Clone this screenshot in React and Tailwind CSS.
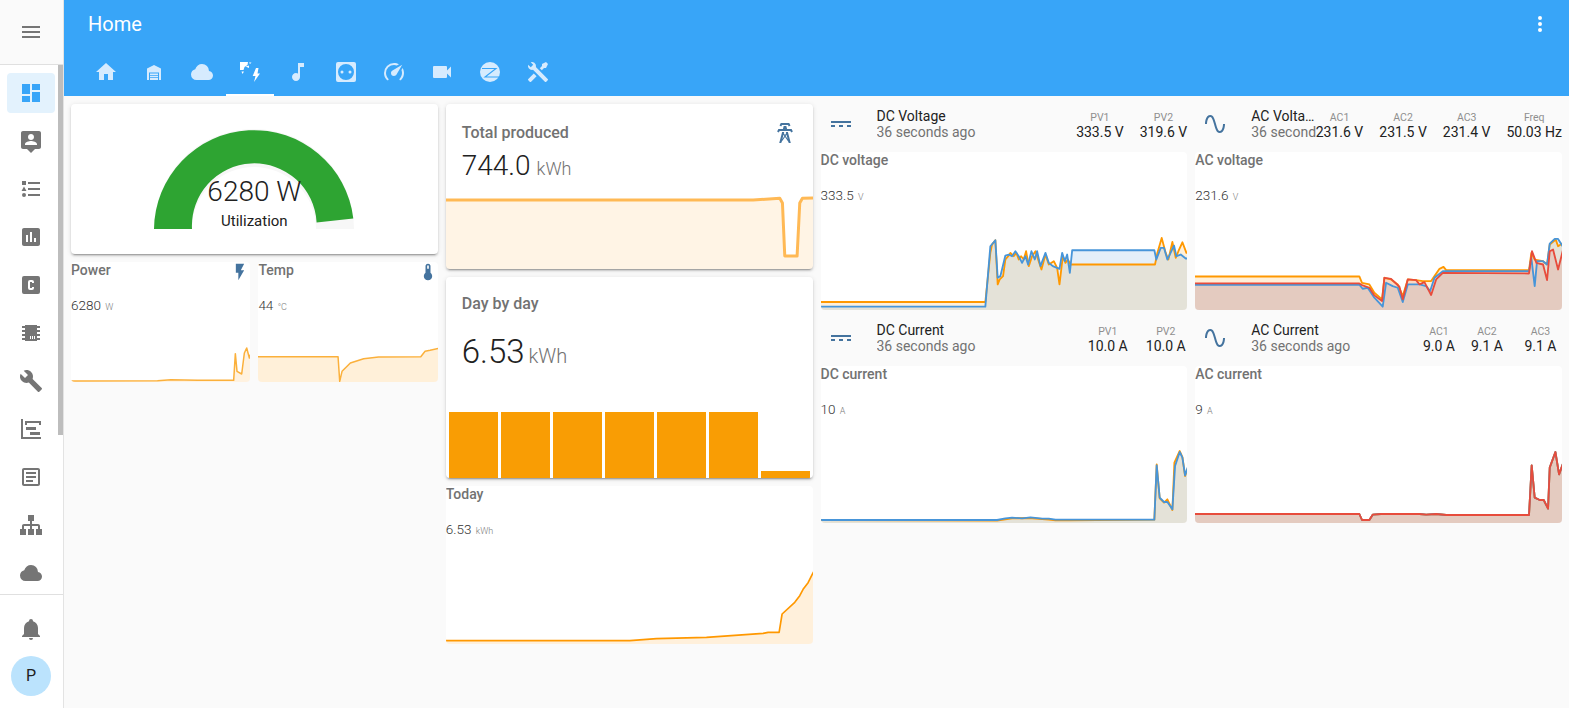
import React from "react";

const paths = {
  menu: "M3,6H21V8H3V6M3,11H21V13H3V11M3,16H21V18H3V16Z",
  dashboard: "M13,3V9H21V3M13,21H21V11H13M3,21H11V15H3M3,13H11V3H3V13Z",
  tooltipAccount: "M20 2H4C2.9 2 2 2.9 2 4V18C2 19.1 2.9 20 4 20H8L12 24L16 20H20C21.1 20 22 19.1 22 18V4C22 2.9 21.1 2 20 2M12 5C13.7 5 15 6.3 15 8S13.7 11 12 11 9 9.7 9 8 10.3 5 12 5M18 16H6V15C6 13 10 11.9 12 11.9S18 13 18 15V16Z",
  listType: "M5,9.5L7.5,14H2.5L5,9.5M3,4H7V8H3V4M5,20A2,2 0 0,0 7,18A2,2 0 0,0 5,16A2,2 0 0,0 3,18A2,2 0 0,0 5,20M9,5V7H21V5H9M9,19H21V17H9V19M9,13H21V11H9V13Z",
  chartBox: "M19 3H5C3.9 3 3 3.9 3 5V19C3 20.1 3.9 21 5 21H19C20.1 21 21 20.1 21 19V5C21 3.9 20.1 3 19 3M9 17H7V10H9V17M13 17H11V7H13V17M17 17H15V13H17V17Z",
  alphaC: "M11,7A2,2 0 0,0 9,9V15A2,2 0 0,0 11,17H13A2,2 0 0,0 15,15V14H13V15H11V9H13V10H15V9A2,2 0 0,0 13,7H11M5,3H19A2,2 0 0,1 21,5V19A2,2 0 0,1 19,21H5A2,2 0 0,1 3,19V5A2,2 0 0,1 5,3Z",
  chip: "M6,4H18V5H21V7H18V9H21V11H18V13H21V15H18V17H21V19H18V20H6V19H3V17H6V15H3V13H6V11H3V9H6V7H3V5H6V4M11,15V18H12V15H11M13,15V18H14V15H13M15,15V18H16V15H15Z",
  wrench: "M22.7,19L13.6,9.9C14.5,7.6 14,4.9 12.1,3C10.1,1 7.1,0.6 4.7,1.7L9,6L6,9L1.6,4.7C0.4,7.1 0.9,10.1 2.9,12.1C4.8,14 7.5,14.5 9.8,13.6L18.9,22.7C19.3,23.1 19.9,23.1 20.3,22.7L22.6,20.4C23.1,20 23.1,19.3 22.7,19Z",
  timeline: "M2,2H4V20H22V22H2V2M7,10H17V13H7V10M11,15H21V18H11V15M6,4H22V8H20V6H8V8H6V4Z",
  textBox: "M5,3C3.89,3 3,3.89 3,5V19C3,20.11 3.89,21 5,21H19C20.11,21 21,20.11 21,19V5C21,3.89 20.11,3 19,3H5M5,5H19V19H5V5M7,7V9H17V7H7M7,11V13H17V11H7M7,15V17H14V15H7Z",
  sitemap: "M9,2V8H11V11H5C3.89,11 3,11.89 3,13V16H1V22H7V16H5V13H11V16H9V22H15V16H13V13H19V16H17V22H23V16H21V13C21,11.89 20.11,11 19,11H13V8H15V2H9Z",
  cloud: "M6.5 20Q4.22 20 2.61 18.43 1 16.85 1 14.58 1 12.63 2.17 11.1 3.35 9.57 5.25 9.15 5.88 6.85 7.75 5.43 9.63 4 12 4 14.93 4 16.96 6.04 19 8.07 19 11 20.73 11.2 21.86 12.5 23 13.78 23 15.5 23 17.38 21.69 18.69 20.38 20 18.5 20Z",
  bell: "M21,19V20H3V19L5,17V11C5,7.9 7.03,5.17 10,4.29C10,4.19 10,4.1 10,4A2,2 0 0,1 12,2A2,2 0 0,1 14,4C14,4.1 14,4.19 14,4.29C16.97,5.17 19,7.9 19,11V17L21,19M14,21A2,2 0 0,1 12,23A2,2 0 0,1 10,21",
  home: "M10,20V14H14V20H19V12H22L12,3L2,12H5V20H10Z",
  garage: "M12 5L19 8.5V20H17V12.5H7V20H5V8.5ZM8 13.5H16V15H8ZM8 15.75H16V17.25H8ZM8 18H16V20H8Z",
  music: "M12 3V13.55C11.41 13.21 10.73 13 10 13C7.79 13 6 14.79 6 17S7.79 21 10 21 14 19.21 14 17V7H18V3H12Z",
  socket: "M4 2H20A2 2 0 0 1 22 4V20A2 2 0 0 1 20 22H4A2 2 0 0 1 2 20V4A2 2 0 0 1 4 2ZM12 4A8 8 0 1 0 12 20A8 8 0 1 0 12 4ZM8 10.5A1.5 1.5 0 1 1 8 13.5A1.5 1.5 0 1 1 8 10.5ZM16 10.5A1.5 1.5 0 1 1 16 13.5A1.5 1.5 0 1 1 16 10.5Z",
  speedometer: "M12 16A3 3 0 0 1 9 13C9 11.88 9.61 10.9 10.5 10.39L20.21 4.77L14.68 14.35C14.18 15.33 13.17 16 12 16M12 3C13.81 3 15.5 3.5 16.97 4.32L14.87 5.53C14 5.19 13 5 12 5A8 8 0 0 0 4 13C4 15.21 4.89 17.21 6.34 18.65H6.35C6.74 19.04 6.74 19.67 6.35 20.06C5.96 20.45 5.32 20.45 4.93 20.07V20.07C3.12 18.26 2 15.76 2 13A10 10 0 0 1 12 3M22 13C22 15.76 20.88 18.26 19.07 20.07V20.07C18.68 20.45 18.05 20.45 17.66 20.06C17.27 19.67 17.27 19.04 17.66 18.65V18.65C19.11 17.2 20 15.21 20 13C20 12 19.81 11 19.46 10.1L20.67 8C21.5 9.5 22 11.18 22 13Z",
  video: "M17,10.5V7A1,1 0 0,0 16,6H4A1,1 0 0,0 3,7V17A1,1 0 0,0 4,18H16A1,1 0 0,0 17,17V13.5L21,17.5V6.5L17,10.5Z",
  tools: "M21.71 20.29L20.29 21.71A1 1 0 0 1 18.88 21.71L7 9.85A3.81 3.81 0 0 1 6 10A4 4 0 0 1 2.22 4.7L4.76 7.24L5.29 6.71L6.71 5.29L7.24 4.76L4.7 2.22A4 4 0 0 1 10 6A3.81 3.81 0 0 1 9.85 7L21.71 18.88A1 1 0 0 1 21.71 20.29M2.29 18.88A1 1 0 0 0 2.29 20.29L3.71 21.71A1 1 0 0 0 5.12 21.71L10.59 16.25L7.76 13.42M20 2L16 4V6L13.83 8.17L15.83 10.17L18 8H20L22 4Z",
  flash: "M7,2V13H10V22L17,10H13L17,2H7Z",
  thermometer: "M15 13V5A3 3 0 0 0 9 5V13A5 5 0 1 0 15 13M12 4A1 1 0 0 1 13 5V8H11V5A1 1 0 0 1 12 4Z",
  tower: "M8.28,5.45L6.5,4.55L7.76,2H16.23L17.5,4.55L15.72,5.44L15,4H9L8.28,5.45M18.62,8H14.09L13.3,5H10.7L9.91,8H5.38L4.1,10.55L5.89,11.44L6.62,10H17.38L18.1,11.45L19.89,10.56L18.62,8M17.77,22H15.7L15.46,21.1L12,15.9L8.53,21.1L8.3,22H6.23L9.12,11H11.19L10.83,12.35L12,14.1L13.16,12.35L12.81,11H14.88L17.77,22M11.4,15L10.5,13.65L9.32,18.13L11.4,15M14.68,18.12L13.5,13.64L12.6,15L14.68,18.12Z",
  currentDc: "M2,9H22V11H2V9M2,13H6V15H2V13M10,13H14V15H10V13M18,13H22V15H18V13Z",
  sine: "M16.5,21C13.5,21 12.31,16.76 11.05,12.28C10.14,9.04 9,5 7.5,5C4.11,5 4,11.93 4,12H2C2,11.63 2.06,3 7.5,3C10.5,3 11.71,7.25 12.97,11.74C13.86,14.96 15,19 16.5,19C19.94,19 20.03,12.07 20.03,12H22.03C22.03,12.37 21.97,21 16.5,21Z",
  dots: "M12,16A2,2 0 0,1 14,18A2,2 0 0,1 12,20A2,2 0 0,1 10,18A2,2 0 0,1 12,16M12,10A2,2 0 0,1 14,12A2,2 0 0,1 12,14A2,2 0 0,1 10,12A2,2 0 0,1 12,10M12,4A2,2 0 0,1 14,6A2,2 0 0,1 12,8A2,2 0 0,1 10,6A2,2 0 0,1 12,4Z",
};

function Icon({ d, className = "w-6 h-6" }) {
  return (
    <svg viewBox="0 0 24 24" fill="currentColor" fillRule="evenodd" className={"block shrink-0 " + className}>
      <path d={d} />
    </svg>
  );
}

function SolarIcon() {
  return (
    <svg viewBox="0 0 24 24" fill="currentColor" className="block w-6 h-6">
      <path d="M2 2H10L9.5 5L6.5 7L5.5 10L2 10Z" />
      <path d="M11 2.5H13.5L12 4Z" />
      <path d="M7.5 6.5L11 5.5L11 8Z" />
      <path d="M3.5 11.5H6L4.5 14Z" />
      <path d="M18 8H20.5L19.5 13.5H22L16 22L17.5 16H14.7Z" />
    </svg>
  );
}

function ZigbeeIcon() {
  return (
    <svg viewBox="0 0 24 24" className="block w-6 h-6">
      <circle cx="12" cy="12" r="10" fill="currentColor" />
      <path d="M4 8.5H18L7 17H21" fill="none" stroke="#38a5f8" strokeWidth="1.1" />
    </svg>
  );
}

const ORANGE = "#ff9800";
const BLUE = "#4795d9";
const RED = "#e74c3c";

// box and points use the same units: 1/3 of a screen pixel
function Chart({ box, series, className, opacity = 0.15 }) {
  const [, y, , h] = box.split(" ").map(Number);
  const bottom = y + h;
  return (
    <svg viewBox={box} preserveAspectRatio="none" className={"block w-full mt-auto " + className}>
      {series.map((s, i) => {
        const pts = s.points.trim().split(/\s+/);
        const first = pts[0].split(",")[0];
        const last = pts[pts.length - 1].split(",")[0];
        return (
          <path
            key={"f" + i}
            d={`M${first},${bottom + 10} L${pts.join(" L")} L${last},${bottom + 10}Z`}
            fill={s.color}
            fillOpacity={s.fill || opacity}
          />
        );
      })}
      {series.map((s, i) => (
        <polyline
          key={i}
          points={s.points}
          fill="none"
          stroke={s.line || s.color}
          strokeWidth={s.width || 5.5}
          strokeLinejoin="round"
          strokeLinecap="round"
        />
      ))}
    </svg>
  );
}

const dcV = [
  { color: ORANGE, points: "10,618 510,618 525,470 530,445 540,432 547,565 553,550 563,540 570,490 580,478 585,470 595,480 603,470 610,490 617,480 625,490 632,465 640,510 650,480 660,465 668,490 678,520 690,475 700,505 715,495 725,515 732,565 742,480 750,500 757,490 765,505 1018,505 1025,470 1038,425 1050,470 1058,490 1070,437 1080,485 1088,465 1100,438 1112,470 1125,468" },
  { color: BLUE, points: "10,632 510,632 525,450 540,432 547,545 555,540 570,478 580,475 590,480 600,465 610,480 620,500 630,480 638,505 648,465 658,490 665,465 675,510 690,470 700,500 712,510 732,518 740,470 748,495 755,475 763,530 770,462 1016,462 1022,490 1035,455 1045,455 1055,490 1075,448 1082,480 1095,475 1110,487 1125,487" },
];
const acV = [
  { color: ORANGE, points: "10,541 510,541 518,560 540,565 555,590 578,610 585,545 605,550 625,565 640,600 655,550 680,552 700,555 725,555 735,540 750,518 762,512 770,522 1018,522 1025,470 1035,490 1060,495 1072,505 1080,445 1098,430 1105,450 1125,437" },
  { color: BLUE, points: "10,566 510,566 520,578 535,575 555,605 580,632 590,560 610,570 625,575 640,618 655,565 690,565 710,570 722,585 735,545 760,525 1018,525 1025,485 1035,570 1042,495 1060,495 1072,505 1080,442 1095,428 1105,428 1125,460" },
  { color: RED, points: "10,562 510,562 520,568 540,575 555,598 578,615 585,545 605,548 630,572 640,610 655,550 680,552 690,565 705,558 725,597 740,550 760,530 1018,532 1027,465 1040,500 1060,505 1072,552 1080,465 1090,460 1105,520 1125,440" },
];
const dcA = [
  { color: ORANGE, points: "10,612 545,614 590,607 640,606 680,609 700,611 720,613 760,613 1016,611 1023,445 1032,547 1045,560 1055,550 1070,582 1076,440 1092,405 1100,423 1108,480 1125,430" },
  { color: BLUE, points: "10,612 545,612 570,607 590,605 620,607 645,604 680,608 700,608 720,611 1016,611 1023,448 1032,545 1045,558 1055,558 1070,580 1078,450 1092,408 1100,425 1108,478 1125,428" },
];
const acCurrent = "10,594 510,594 518,612 540,612 550,596 575,594 690,594 710,596 740,594 770,597 1018,597 1026,448 1035,545 1050,552 1062,552 1075,578 1080,455 1097,408 1108,475 1125,428";
const acA = [
  { color: ORANGE, points: acCurrent },
  { color: BLUE, points: acCurrent },
  { color: RED, points: acCurrent },
];

function Mini({ title, value, unit, icon, className = "", children }) {
  return (
    <div className={"relative flex flex-col bg-white rounded-sm overflow-hidden " + className}>
      <div className="text-sm leading-4 font-medium text-[#727272]">{title}</div>
      {icon && (
        <div className="absolute top-0 right-0 text-[#44739e]">
          <Icon d={icon} className="w-5 h-5" />
        </div>
      )}
      <div className="mt-[19px] text-[13.5px] leading-4 font-light text-[#333]">
        {value} <span className="text-[9px] text-[#7d7d7d] ml-px">{unit}</span>
      </div>
      {children}
    </div>
  );
}

function Glance({ icon, name, cells }) {
  return (
    <div className="flex items-center h-10 pl-2">
      <div className="text-[#44739e]">
        <Icon d={icon} />
      </div>
      <div className="ml-6 flex-1 min-w-0 text-sm leading-4">
        <div className="truncate text-[#212121]">{name}</div>
        <div className="whitespace-nowrap overflow-hidden text-[#727272]">36 seconds ago</div>
      </div>
      <div className="flex gap-4 text-center">
        {cells.map((c) => (
          <div key={c.label} className={c.cls}>
            <div className="text-[10.5px] leading-3 mt-1 text-[#8f8f8f]">{c.label}</div>
            <div className="text-sm leading-4 whitespace-nowrap text-[#212121]">{c.value}</div>
          </div>
        ))}
      </div>
    </div>
  );
}

const navIcons = ["tooltipAccount", "listType", "chartBox", "alphaC", "chip", "wrench", "timeline", "textBox", "sitemap", "cloud"];
const tabs = ["home", "garage", "cloud", null, "music", "socket", "speedometer", "video", "zigbee", "tools"];
const bars = [66, 66, 66, 66, 66, 66, 7];

function Gauge() {
  return (
    <svg viewBox="0 0 200 100" className="block w-[200px] h-[100px]">
      <path d="M0 100A100 100 0 0 1 200 100H162A62 62 0 0 0 38 100Z" fill="#f7f7f7" />
      <path d="M0 100A100 100 0 0 1 199.3 89.4L162.6 93.4A62 62 0 0 0 38 100Z" fill="#2ea432" />
    </svg>
  );
}

const cardShadow = "shadow-[0_2px_2px_0_rgba(0,0,0,0.14),0_1px_5px_0_rgba(0,0,0,0.12),0_3px_1px_-2px_rgba(0,0,0,0.2)]";

export default function App() {
  return (
    <div className="flex h-screen overflow-hidden bg-[#fafafa] [font-family:Roboto,sans-serif]">
      <aside className="w-16 shrink-0 flex flex-col bg-white border-r border-[#e3e3e3]">
        <div className="h-[65px] shrink-0 flex items-center justify-center pr-0.5 bg-[#fafafa] border-b border-[#e0e0e0] text-[#757575]">
          <Icon d={paths.menu} />
        </div>
        <div className="relative flex-1 pt-2">
          <div className="absolute right-0 top-0 w-[5px] h-[370px] bg-[#bdbdbd]" />
          <div className="mx-[7px] w-12 h-10 rounded bg-[#e3f2fd] flex items-center justify-center text-[#38a5f8]">
            <Icon d={paths.dashboard} />
          </div>
          {navIcons.map((n) => (
            <div key={n} className="mx-[7px] mt-2 w-12 h-10 flex items-center justify-center text-[#757575]">
              <Icon d={paths[n]} />
            </div>
          ))}
        </div>
        <div className="h-[114px] shrink-0 border-t border-[#e0e0e0] flex flex-col items-center pr-px pt-[22px]">
          <div className="text-[#757575]">
            <Icon d={paths.bell} />
          </div>
          <div className="mt-[15px] w-10 h-10 rounded-full bg-[#bbe3fd] flex items-center justify-center text-base text-[#212121]">P</div>
        </div>
      </aside>

      <div className="flex-1 min-w-0 flex flex-col">
        <header className="h-24 shrink-0 bg-[#38a5f8] text-white">
          <div className="h-12 flex items-center pl-6 pr-[17px]">
            <div className="flex-1 text-xl">Home</div>
            <Icon d={paths.dots} />
          </div>
          <div className="h-12 flex pl-[18px]">
            {tabs.map((t, i) => (
              <div
                key={i}
                className={
                  t
                    ? "w-12 h-12 flex items-center justify-center text-[#d6ebfe]"
                    : "w-12 h-12 flex items-center justify-center text-white border-b-2 border-white pt-0.5"
                }
              >
                {t === null ? <SolarIcon /> : t === "zigbee" ? <ZigbeeIcon /> : <Icon d={paths[t]} />}
              </div>
            ))}
          </div>
        </header>

        <main className="flex-1 grid grid-cols-4 gap-2 pl-[7px] pr-[7px] pt-2 items-start">
          <div className="flex flex-col gap-2">
            <div className={"relative h-[150px] bg-white rounded-sm flex justify-center pt-[25px] " + cardShadow}>
              <Gauge />
              <div className="absolute inset-x-0 top-[72px] text-center text-[28px] leading-8 font-light text-[#212121]">6280 W</div>
              <div className="absolute inset-x-0 top-[108px] text-center text-[15px] leading-[18px] text-[#212121]">Utilization</div>
            </div>
            <div className="flex gap-2">
              <Mini title="Power" value="6280" unit="W" icon={paths.flash} className="flex-1 h-[120px]">
                <Chart
                  box="21 740 537 117"
                  className="h-[39px]"
                  series={[{ color: ORANGE, width: 4.5, fill: 0.12, line: "#fbb03b", points: "15,854 280,853 320,850 400,852 508,852 513,772 518,825 532,833 540,770 547,755 555,785 565,755" }]}
                />
              </Mini>
              <Mini title="Temp" value="44" unit="°C" icon={paths.thermometer} className="flex-1 h-[120px]">
                <Chart
                  box="582 740 540 117"
                  className="h-[39px]"
                  series={[{ color: ORANGE, width: 4.5, fill: 0.15, line: "#fbb03b", points: "575,781 823,781 828,855 835,825 860,800 900,787 945,782 1072,781 1085,765 1100,762 1130,755" }]}
                />
              </Mini>
            </div>
          </div>

          <div className="flex flex-col gap-2">
            <div className={"relative h-[165px] flex flex-col bg-white rounded-sm overflow-hidden " + cardShadow}>
              <div className="pl-4 pt-[17px] text-base leading-6 font-medium text-[#727272]">Total produced</div>
              <div className="pl-4 mt-[5px] text-[28px] leading-8 font-light text-[#212121]">
                744.0<span className="ml-1.5 text-lg text-[#727272]">kWh</span>
              </div>
              <div className="absolute top-[17px] right-4 text-[#44739e]">
                <Icon d={paths.tower} />
              </div>
              <Chart
                box="18 290 1101 229"
                className="h-[76px]"
                series={[{ color: ORANGE, width: 9, fill: 0.1, line: "#ffb955", points: "10,311 940,311 1020,306 1028,320 1035,480 1072,480 1080,320 1088,306 1130,305" }]}
              />
            </div>

            <div className={"relative h-[201px] flex flex-col bg-white rounded-sm overflow-hidden " + cardShadow}>
              <div className="pl-4 pt-[15px] text-base leading-6 font-medium text-[#727272]">Day by day</div>
              <div className="pl-4 mt-4 text-[33px] leading-10 font-light text-[#212121]">
                6.53<span className="ml-1 text-xl text-[#727272]">kWh</span>
              </div>
              <div className="mt-auto flex items-end gap-[3px] pl-[3px]">
                {bars.map((h, i) => (
                  <div
                    key={i}
                    className={h > 10 ? "w-[49px] h-[66px] bg-[#f99d04]" : "w-[49px] h-[7px] bg-[#f99d04]"}
                  />
                ))}
              </div>
            </div>

            <Mini title="Today" value="6.53" unit="kWh" className="h-[158px]">
              <Chart
                box="18 540 1101 222"
                className="h-[74px]"
                series={[{ color: ORANGE, width: 5, fill: 0.14, points: "10,752 570,752 650,746 800,742 970,730 985,727 1018,727 1027,672 1065,637 1080,617 1090,598 1105,578 1119,550 1130,530" }]}
              />
            </Mini>
          </div>

          <div className="flex flex-col gap-2">
            <Glance
              icon={paths.currentDc}
              name="DC Voltage"
              cells={[
                { label: "PV1", value: "333.5 V" },
                { label: "PV2", value: "319.6 V" },
              ]}
            />
            <Mini title="DC voltage" value="333.5" unit="V" className="h-[158px]">
              <Chart box="18 380 1098 262" className="h-[87px]" series={dcV} />
            </Mini>
            <Glance
              icon={paths.currentDc}
              name="DC Current"
              cells={[
                { label: "PV1", value: "10.0 A", cls: "min-w-[41px]" },
                { label: "PV2", value: "10.0 A", cls: "min-w-[43px]" },
              ]}
            />
            <Mini title="DC current" value="10" unit="A" className="h-[157px]">
              <Chart box="18 390 1098 231" className="h-[77px]" series={dcA} />
            </Mini>
          </div>

          <div className="flex flex-col gap-2">
            <Glance
              icon={paths.sine}
              name="AC Voltage"
              cells={[
                { label: "AC1", value: "231.6 V" },
                { label: "AC2", value: "231.5 V" },
                { label: "AC3", value: "231.4 V" },
                { label: "Freq", value: "50.03 Hz" },
              ]}
            />
            <Mini title="AC voltage" value="231.6" unit="V" className="h-[158px]">
              <Chart box="18 380 1098 262" className="h-[87px]" series={acV} />
            </Mini>
            <Glance
              icon={paths.sine}
              name="AC Current"
              cells={[
                { label: "AC1", value: "9.0 A" },
                { label: "AC2", value: "9.1 A" },
                { label: "AC3", value: "9.1 A", cls: "min-w-[43px]" },
              ]}
            />
            <Mini title="AC current" value="9" unit="A" className="h-[157px]">
              <Chart box="18 390 1098 231" className="h-[77px]" series={acA} />
            </Mini>
          </div>
        </main>
      </div>
    </div>
  );
}
